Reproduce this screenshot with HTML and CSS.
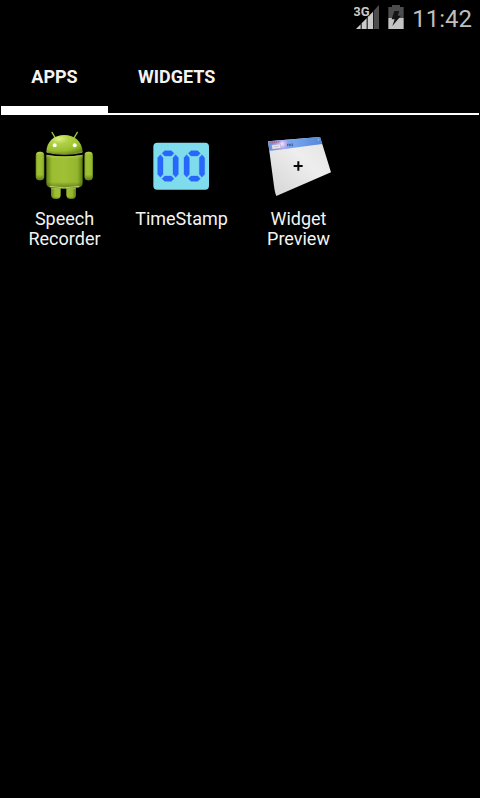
FILE: index.html
```html
<!DOCTYPE html>
<html lang="en">
<head>
<meta charset="utf-8">
<meta name="viewport" content="width=device-width, initial-scale=1">
<title>Apps</title>
<link rel="stylesheet" href="styles.css">
</head>
<body>
<header class="status">
  <svg class="signal" viewBox="42 12 78 78" role="img" aria-label="3G signal">
    <path d="M48 87 62 73V87ZM65 70 80 55V87H65ZM83 51 99 35V87H83Z" fill="#cacaca"/>
    <path d="M101 32 117 15V87H101Z" fill="#4d4d4d"/>
    <text class="network" x="40" y="48">3G</text>
  </svg>
  <svg class="battery" viewBox="144 12 48 78" role="img" aria-label="Battery charging">
    <path d="M156 15H180V21H191V54H145V21H156Z" fill="#4d4d4d"/>
    <path d="M145 54H191V87H145Z" fill="#c4c4c4"/>
    <path d="M163 33H178L173 47H183L157 78L164 58H155Z" fill="#141414"/>
  </svg>
  <time class="clock">11:42</time>
</header>
<nav class="tabs" role="tablist">
  <button class="tab tab-active" role="tab" aria-selected="true">APPS</button>
  <button class="tab" role="tab" aria-selected="false">WIDGETS</button>
</nav>
<main class="grid">
  <a class="app" href="#speech-recorder">
    <svg class="icon" viewBox="9 12 219 216" aria-hidden="true">
      <defs>
        <linearGradient id="body" x1="0" x2="1" y1="0" y2="0">
          <stop offset="0" stop-color="#638414"/><stop offset=".16" stop-color="#9cbd32"/><stop offset=".5" stop-color="#a0c035"/><stop offset=".85" stop-color="#94b62e"/><stop offset="1" stop-color="#5b7c10"/>
        </linearGradient>
        <radialGradient id="head" cx=".35" cy=".2" r=".85">
          <stop offset="0" stop-color="#e0f284"/><stop offset=".3" stop-color="#b1d246"/><stop offset=".75" stop-color="#9abd30"/><stop offset="1" stop-color="#6c8f18"/>
        </radialGradient>
        <linearGradient id="shade" x1="0" x2="0" y1="0" y2="1">
          <stop offset="0" stop-color="#d4e878" stop-opacity=".5"/><stop offset=".12" stop-color="#d4e878" stop-opacity="0"/><stop offset=".8" stop-color="#2d4200" stop-opacity="0"/><stop offset="1" stop-color="#2d4200" stop-opacity=".55"/>
        </linearGradient>
      </defs>
      <path d="M81 22 90 37M157 22 148 37" stroke="#9fbf38" stroke-width="4" stroke-linecap="round"/>
      <g fill="url(#body)">
        <path d="M78 175H107V210Q107 222 93 222T78 210ZM124 175H153V210Q153 222 139 222T124 210Z"/>
        <rect x="32" y="80" width="26" height="86" rx="12"/>
        <rect x="178" y="80" width="26" height="86" rx="12"/>
        <path d="M64 89Q117 98 173 89V173Q173 186 157 188Q119 194 79 188Q64 186 64 173Z"/>
      </g>
      <g fill="url(#shade)">
        <rect x="32" y="80" width="26" height="86" rx="12"/>
        <rect x="178" y="80" width="26" height="86" rx="12"/>
        <path d="M64 89Q117 98 173 89V173Q173 186 157 188Q119 194 79 188Q64 186 64 173Z"/>
        <path d="M78 190H107V210Q107 222 93 222T78 210ZM124 190H153V210Q153 222 139 222T124 210Z"/>
      </g>
      <path d="M74 184Q118 193 163 184" fill="none" stroke="#b8cf70" stroke-width="3"/>
      <path d="M64 81C65 49 87 30 118 30S171 49 173 81Q118 93 64 81Z" fill="url(#head)"/>
      <path d="M65 82Q118 94 172 82" fill="none" stroke="#c2dc68" stroke-width="2"/>
      <circle cx="89" cy="61" r="6" fill="#fff"/><circle cx="149" cy="61" r="6" fill="#fff"/>
    </svg>
    <span class="label">Speech Recorder</span>
  </a>
  <a class="app" href="#timestamp">
    <svg class="icon" viewBox="0 -3 219 216" aria-hidden="true">
      <defs>
        <g id="zero">
          <path d="M59 62H79L87 70 79 78H59L51 70ZM59 138H79L87 146 79 154H59L51 146Z"/>
          <path d="M46 74 54 83V133L46 142 38 133V83ZM92 74 100 83V133L92 142 84 133V83Z"/>
        </g>
      </defs>
      <rect x="25" y="38" width="167" height="141" rx="12" fill="#7fdcec"/>
      <g fill="#2866fc" stroke="#2866fc" stroke-width="1"><use href="#zero"/><use href="#zero" x="79"/></g>
    </svg>
    <span class="label">TimeStamp</span>
  </a>
  <a class="app" href="#widget-preview">
    <svg class="icon" viewBox="6 -3 219 216" aria-hidden="true">
      <defs>
        <linearGradient id="page" x1="0" x2="1" y1="1" y2="0"><stop offset="0" stop-color="#d4d4d4"/><stop offset=".6" stop-color="#eee"/><stop offset="1" stop-color="#e2e2e2"/></linearGradient>
        <linearGradient id="bar" x1="0" x2="1" y1="0" y2="0"><stop offset="0" stop-color="#6c93e2"/><stop offset=".5" stop-color="#75a4ef"/><stop offset="1" stop-color="#5286d8"/></linearGradient>
        <radialGradient id="glow"><stop offset="0" stop-color="#fff0ff" stop-opacity=".95"/><stop offset=".45" stop-color="#e5b4ed" stop-opacity=".6"/><stop offset="1" stop-color="#8daeff" stop-opacity="0"/></radialGradient>
        <clipPath id="top"><path d="M24 34 180 21 187 42 28 63Z"/></clipPath>
      </defs>
      <path d="M24 34 180 21Q188 45 213 127L49 198Q45 191 42 168Z" fill="url(#page)"/>
      <path d="M24 34 180 21 187 42 28 63Z" fill="url(#bar)"/>
      <circle cx="66" cy="42" r="27" fill="url(#glow)" clip-path="url(#top)"/>
      <path d="M35 45 61 42 63 54 37 58Z" fill="#e9e3ee" stroke="#9c91b5" stroke-width="1"/>
      <path d="M41 51 46 48 49 51 56 48" fill="none" stroke="#b6a6b9" stroke-width="2"/>
      <path d="M30 38 61 35" stroke="#a36694" stroke-width="4" stroke-dasharray="4 2"/>
      <path d="M81 43 86 42M83 42V49M88 42V48M88 43H92V46H88M95 42H99L95 47H99" fill="none" stroke="#344f83" stroke-width="2"/>
      <path d="M173 30 178 29" stroke="#9abbed" stroke-width="4"/>
      <path d="M101 108H128M115 94V122" stroke="#080808" stroke-width="6"/>
    </svg>
    <span class="label">Widget Preview</span>
  </a>
</main>
</body>
</html>
```
FILE: styles.css
```css
* {
  box-sizing: border-box;
}

body {
  margin: 0;
  min-height: 100vh;
  background: #000;
  color: #f3f3f3;
  font-family: Roboto, "Liberation Sans", sans-serif;
}

.status {
  display: flex;
  align-items: center;
  justify-content: flex-end;
  gap: 8px;
  height: 38px;
  padding: 0 8px;
}

.signal {
  width: 26px;
  height: 26px;
  margin-bottom: 4px;
}

.network {
  font-size: 39px;
  font-weight: 700;
  fill: #cacaca;
  stroke: #000;
  stroke-width: 4px;
  paint-order: stroke;
}

.battery {
  width: 16px;
  height: 26px;
  margin-bottom: 4px;
}

.clock {
  color: #bebebe;
  font-size: 24px;
  line-height: 38px;
}

.tabs {
  display: flex;
  height: 77px;
  margin: 0 1px;
  border-bottom: 2px solid #fff;
}

.tab {
  min-width: 107px;
  height: 77px;
  padding: 0 30px;
  border: 0;
  background: none;
  color: #f3f3f3;
  font-family: inherit;
  font-size: 18px;
  font-weight: 700;
}

.tab-active {
  background: linear-gradient(#fff, #fff) bottom / 100% 9px no-repeat;
}

.grid {
  display: grid;
  grid-template-columns: repeat(auto-fill, minmax(117px, 1fr));
  padding: 14px 6px;
}

.app {
  display: flex;
  flex-direction: column;
  align-items: center;
  gap: 8px;
  padding: 0 10px;
  color: inherit;
  text-decoration: none;
}

.icon {
  width: 73px;
  height: 72px;
}

.label {
  font-size: 18px;
  line-height: 20px;
  text-align: center;
}
```
